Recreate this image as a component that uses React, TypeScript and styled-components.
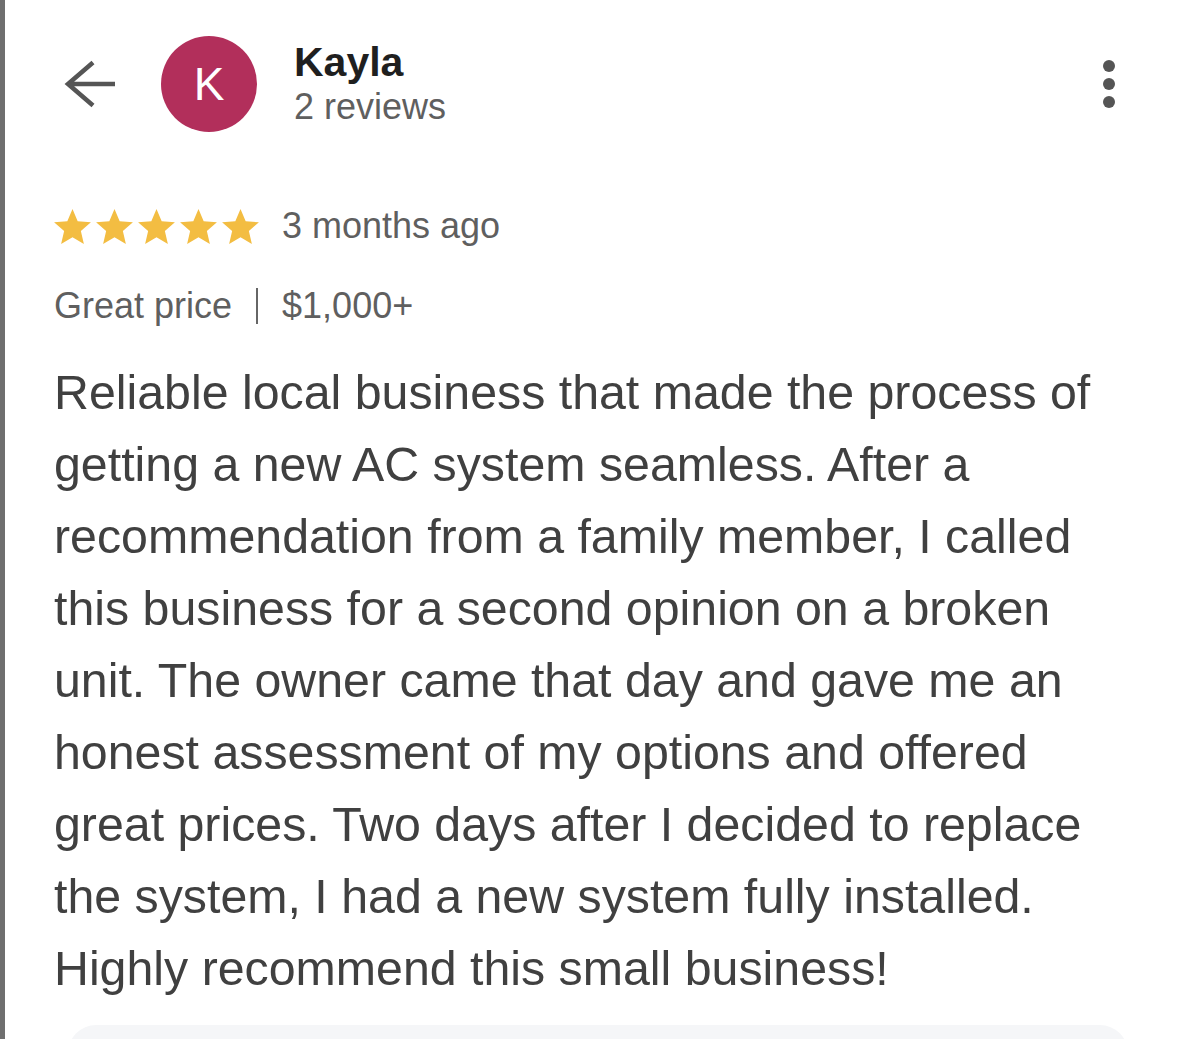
import styled, { createGlobalStyle } from 'styled-components';

const GlobalStyle = createGlobalStyle`
  html, body {
    margin: 0;
    padding: 0;
    background: #fff;
  }

  body {
    font-family: 'Liberation Sans', Arial, Helvetica, sans-serif;
    -webkit-font-smoothing: antialiased;
  }
`;

const StyledPage = styled.div`
  display: flex;
  min-height: 100vh;
  height: 1039px;
  overflow: hidden;
  background: #fff;
`;

const Rail = styled.div`
  flex: 0 0 5px;
  background-color: #6f6f6f;
`;

const Content = styled.main`
  flex: 1;
  padding: 36px 58px 0 49px;
  display: flex;
  flex-flow: column nowrap;
`;

const Header = styled.header`
  display: flex;
  align-items: center;
  margin-right: 5px;
`;

const BackButton = styled.button`
  width: 56px;
  height: 52px;
  padding: 0;
  margin-left: 9px;
  border: none;
  background: transparent;
  color: #555;
  cursor: pointer;

  & svg {
    display: block;
  }
`;

const Avatar = styled.div`
  flex: 0 0 96px;
  width: 96px;
  height: 96px;
  margin-left: 42px;
  display: flex;
  justify-content: center;
  align-items: center;

  border-radius: 50%;
  background-color: #b22f5b;
  color: #fff;
  font-size: 46px;
  line-height: 1;
`;

const Author = styled.div`
  margin-left: 37px;
  display: flex;
  flex-flow: column nowrap;
`;

const AuthorName = styled.div`
  font-size: 41px;
  line-height: 46px;
  font-weight: 700;
  color: #1f1f1f;
`;

const AuthorMeta = styled.div`
  font-size: 36px;
  line-height: 44px;
  color: #5f5f5f;
`;

const MoreButton = styled.button`
  margin-left: auto;
  width: 40px;
  height: 60px;
  padding: 0;
  display: flex;
  flex-flow: column nowrap;
  justify-content: center;
  align-items: center;
  gap: 6px;

  border: none;
  background: transparent;
  cursor: pointer;
`;

const Dot = styled.span`
  width: 12px;
  height: 12px;
  border-radius: 50%;
  background-color: #555;
`;

const MetaRow = styled.div<{ $top: number }>`
  display: flex;
  align-items: center;
  height: 40px;
  margin-top: ${({ $top }) => $top}px;

  font-size: 36px;
  line-height: 40px;
  color: #5f5f5f;
`;

const Stars = styled.div`
  display: flex;
  gap: 5px;
  margin-right: 23px;
`;

const Divider = styled.span`
  width: 2px;
  height: 36px;
  margin: 0 24px;
  background-color: #666;
`;

const ReviewText = styled.p`
  margin: 30px 0 0;
  font-size: 48.3px;
  line-height: 72px;
  color: #404040;
`;

const Reply = styled.div`
  margin: 21px 6px 0 14px;
  height: 60px;
  flex-shrink: 0;
  border-radius: 28px;
  background-color: #f5f6f8;
`;

const Star: React.FC = () => (
  <svg width="37" height="35" viewBox="2 2 20 19" aria-hidden>
    <path
      fill="#f3bd42"
      d="M12 17.27L18.18 21l-1.64-7.03L22 9.24l-7.19-.61L12 2 9.19 8.63 2 9.24l5.46 4.73L5.82 21z"
    />
  </svg>
);

const review =
  'Reliable local business that made the process of getting a new AC system seamless. After a recommendation from a family member, I called this business for a second opinion on a broken unit. The owner came that day and gave me an honest assessment of my options and offered great prices. Two days after I decided to replace the system, I had a new system fully installed. Highly recommend this small business!';

const App: React.FC = () => {
  return (
    <>
      <GlobalStyle />
      <StyledPage>
        <Rail />
        <Content>
          <Header>
            <BackButton type="button" aria-label="Back">
              <svg width="56" height="52" viewBox="0 0 56 52">
                <path
                  d="M52 26H5M30 4.5L5 26l25 21.5"
                  fill="none"
                  stroke="currentColor"
                  strokeWidth="4.5"
                />
              </svg>
            </BackButton>
            <Avatar>K</Avatar>
            <Author>
              <AuthorName>Kayla</AuthorName>
              <AuthorMeta>2 reviews</AuthorMeta>
            </Author>
            <MoreButton type="button" aria-label="More">
              <Dot />
              <Dot />
              <Dot />
            </MoreButton>
          </Header>

          <MetaRow $top={74}>
            <Stars>
              {[0, 1, 2, 3, 4].map(i => (
                <Star key={i} />
              ))}
            </Stars>
            <span>3 months ago</span>
          </MetaRow>

          <MetaRow $top={40}>
            <span>Great price</span>
            <Divider />
            <span>$1,000+</span>
          </MetaRow>

          <ReviewText>{review}</ReviewText>

          <Reply />
        </Content>
      </StyledPage>
    </>
  );
};

export default App;
